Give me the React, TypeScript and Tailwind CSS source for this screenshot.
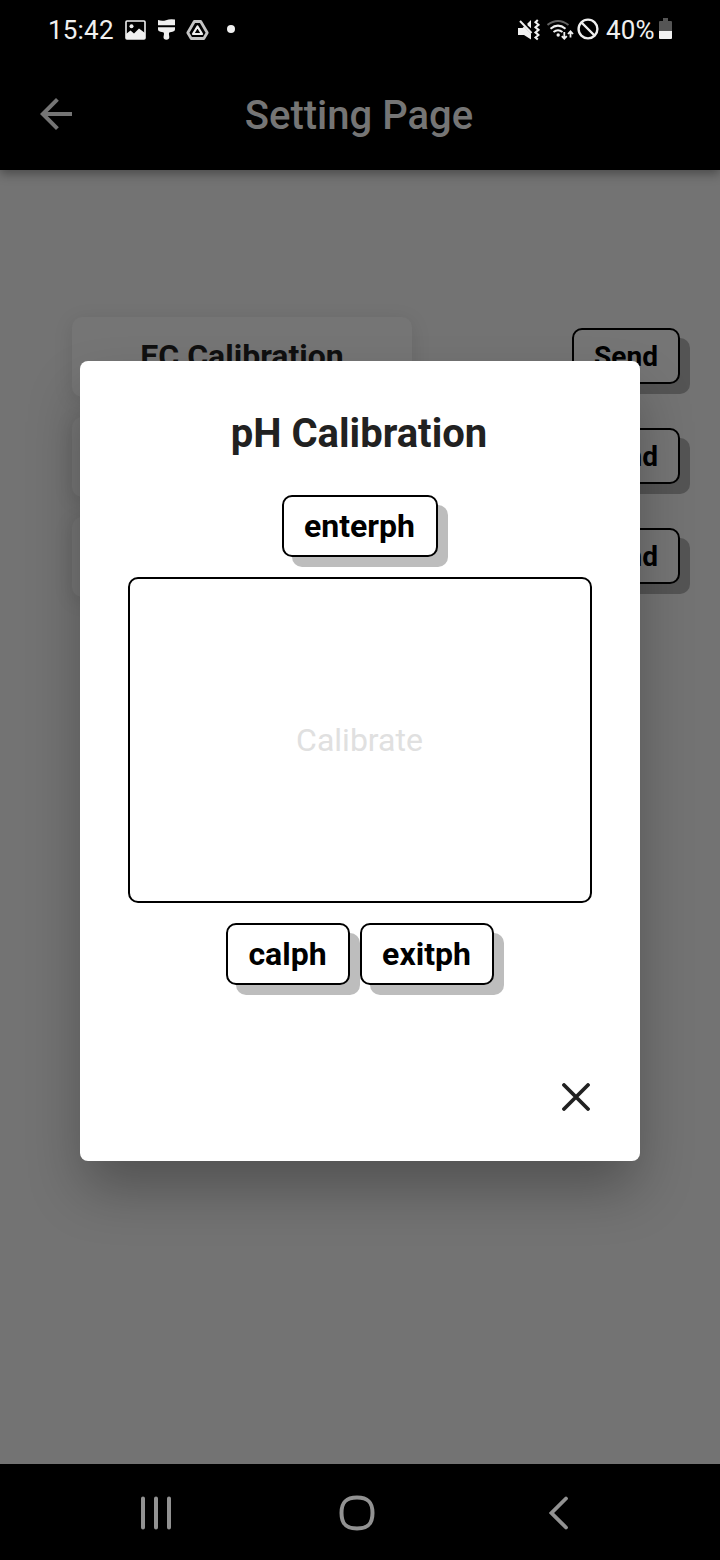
import React from "react";

function StatusBar() {
  return (
    <div className="flex h-[60px] items-center justify-between pr-[48px] pl-[48px] text-[#f0f0f0]">
      <div className="flex items-center">
        <span className="w-[66px] text-[26px] leading-[30px] tracking-[0.2px] whitespace-nowrap">15:42</span>
        <svg className="-mt-px ml-[11px]" width="21" height="20" viewBox="0 0 21 20">
          <rect x="1" y="1" width="19" height="18" rx="1" fill="none" stroke="currentColor" strokeWidth="1.600" />
          <circle cx="6.500" cy="6.300" r="2" fill="currentColor" />
          <path d="M1 14L5.500 10.500L9 13.500L14 8.500L20 13V19H1Z" fill="currentColor" />
        </svg>
        <svg className="-mt-[2px] ml-[12px]" width="17" height="21" viewBox="0 0 17 21" fill="currentColor">
          <path d="M0 1Q4 2.500 8 1.200Q12-.5 17 .5V6.200H0Z" />
          <path d="M0 8.300H17V10.500Q17 12.500 14.500 12.800L12 13.200Q10.700 13.500 10.900 15L11.300 18Q11.300 20.800 8.400 20.800T5.500 18L6 15Q6.200 13.500 5 13.200L2.500 12.800Q0 12.500 0 10.500Z" />
        </svg>
        <svg className="-mt-px ml-[11px]" width="23" height="22" viewBox="0 0 23 22" fill="none" stroke="currentColor" strokeLinejoin="round">
          <path d="M8.300 2.500H14.700L21.200 13.800L17.800 19.500H5.200L1.800 13.800Z" stroke="#c4c4c4" strokeWidth="2.800" />
          <path d="M11.500 7.500L16 15H7Z" strokeWidth="2.200" />
        </svg>
        <span className="-mt-[2px] ml-[18px] size-[8px] rounded-full bg-[#f0f0f0]" />
      </div>
      <div className="flex items-center">
        <svg className="-mt-px" width="22" height="22" viewBox="0 0 22 22">
          <path d="M0 9H4.500L6 7.500L13 14.500V20.500L6 16H0Z" fill="currentColor" />
          <path d="M9.500 4.500L13 1V9.200L9.500 6.200Z" fill="currentColor" />
          <path d="M2 2L13.500 14" stroke="currentColor" strokeWidth="2" />
          <path d="M19.800 1L17.500 3.200L20.500 5.800L17.500 8.300L20.500 10.900L17.500 13.400L20.500 16L17.500 18.500L19.800 20.500" fill="none" stroke="currentColor" strokeWidth="2.100" />
        </svg>
        <svg className="-mt-px ml-[7px]" width="27" height="22" viewBox="0 0 27 22" fill="none" stroke="currentColor" strokeWidth="2">
          <path d="M.5 6Q11-2 21.500 6" stroke="#626262" />
          <path d="M3.500 9.700Q11 3.500 18.500 9.700M6.500 13Q11 9.500 15.500 13" />
          <circle cx="11.200" cy="16" r="1.700" fill="currentColor" stroke="none" />
          <path d="M17.300 13V20M14.800 17.200L17.300 19.800L19.800 17.200M23.500 18.500V12.500M21 15L23.500 12.400L26 15" strokeWidth="1.800" />
        </svg>
        <svg className="-mt-[2px] ml-[3px]" width="22" height="22" viewBox="0 0 22 22" fill="none" stroke="currentColor" strokeWidth="2.400">
          <circle cx="11" cy="11" r="9.400" />
          <path d="M4.500 4.500L17.500 17.500" />
        </svg>
        <span className="ml-[7px] w-[49px] text-[26px] leading-[30px] tracking-[0.2px] whitespace-nowrap">40%</span>
        <svg className="-mt-[3px] ml-[4px]" width="13" height="21" viewBox="0 0 13 21">
          <path d="M4 0H9V3H12Q13 3 13 4V13H0V4Q0 3 1 3H4Z" fill="#555" />
          <path d="M0 13H13V20Q13 21 12 21H1Q0 21 0 20Z" fill="currentColor" />
        </svg>
      </div>
    </div>
  );
}

function AppBar() {
  return (
    <div className="flex h-[110px] items-center px-[40px] text-[#757575]">
      <svg className="-mt-[2px]" width="32" height="32" viewBox="4 4 16 16" fill="currentColor">
        <path d="M20 11H7.830l5.590-5.590L12 4l-8 8 8 8 1.410-1.410L7.830 13H20v-2z" />
      </svg>
      <h1 className="flex-1 pt-[2px] pr-[34px] text-center text-[40px] leading-[48px] font-medium">Setting Page</h1>
    </div>
  );
}

function SettingRow({ label }: { label?: string }) {
  return (
    <div className="flex h-[100px] items-center justify-between pr-[40px] pl-[72px]">
      <div className="flex h-[80px] w-[340px] items-center justify-center rounded-[10px] bg-[#757575] pb-px text-[32px] font-bold text-[#101010] shadow-[0_4px_20px_rgba(0,0,0,0.10)]">
        {label}
      </div>
      <button className="-mt-px h-[56px] w-[108px] rounded-[10px] border-2 border-black bg-[#757575] pt-[2px] text-[28px] leading-[32px] font-bold text-black shadow-[10px_10px_0_#545454]">
        Send
      </button>
    </div>
  );
}

function DialogButton({ label, width }: { label: string; width: string }) {
  return (
    <button
      className={`${width} h-[62px] rounded-[10px] border-2 border-black bg-white pr-px text-[32px] leading-[38px] font-bold text-black shadow-[10px_10px_0_#bdbdbd]`}
    >
      {label}
    </button>
  );
}

function CalibrationDialog() {
  return (
    <div className="absolute top-[361.400px] left-[80px] flex h-[799.200px] w-[560px] flex-col items-center rounded-[8px] bg-white px-[48px] pt-[49px] shadow-[0_30px_56px_-4px_rgba(0,0,0,0.30)]">
      <h2 className="pr-[2px] text-[40px] leading-[47px] font-bold text-[#212121]">pH Calibration</h2>
      <div className="mt-[38px] flex">
        <DialogButton label="enterph" width="w-[156px]" />
      </div>
      <div className="mt-[20px] flex h-[325.200px] w-full items-center justify-center rounded-[10px] border-2 border-black pr-px text-[32px] text-[#e0e0e0]">
        Calibrate
      </div>
      <div className="mt-[20.300px] flex gap-[10px]">
        <DialogButton label="calph" width="w-[124px]" />
        <DialogButton label="exitph" width="w-[134px]" />
      </div>
      <button className="mt-[98px] mr-[2px] self-end" aria-label="Close">
        <svg width="28" height="28" viewBox="0 0 28 28" fill="none" stroke="#212121" strokeWidth="3.800" strokeLinecap="round">
          <path d="M2 2L26 26M26 2L2 26" />
        </svg>
      </button>
    </div>
  );
}

function NavigationBar() {
  return (
    <div className="flex h-[96px] items-center bg-black pt-[2px] pl-[140px] text-[#929292]">
      <svg width="32" height="34" viewBox="0 0 32 34" stroke="currentColor" strokeWidth="4" strokeLinecap="round">
        <path d="M3 2.500V31.500M16 2.500V31.500M29 2.500V31.500" />
      </svg>
      <svg className="ml-[167px]" width="36" height="36" viewBox="0 0 36 36" fill="none" stroke="currentColor" strokeWidth="4">
        <path d="M18 2.500C29 2.500 33.500 7 33.500 18S29 33.500 18 33.500S2.500 29 2.500 18S7 2.500 18 2.500Z" />
      </svg>
      <svg className="ml-[174px]" width="20" height="34" viewBox="0 0 20 34" fill="none" stroke="currentColor" strokeWidth="3.800" strokeLinecap="round">
        <path d="M17 2.500L2.500 17L17 31.500" />
      </svg>
    </div>
  );
}

export default function App() {
  return (
    <div className="relative flex h-[1560px] w-[720px] flex-col overflow-hidden bg-[#737373] font-[Roboto,sans-serif]">
      <header className="bg-black shadow-[0_4px_10px_rgba(0,0,0,0.35)]">
        <StatusBar />
        <AppBar />
      </header>
      <main className="flex-1 pt-[136.500px]">
        <SettingRow label="EC Calibration" />
        <SettingRow />
        <SettingRow />
      </main>
      <CalibrationDialog />
      <NavigationBar />
    </div>
  );
}
